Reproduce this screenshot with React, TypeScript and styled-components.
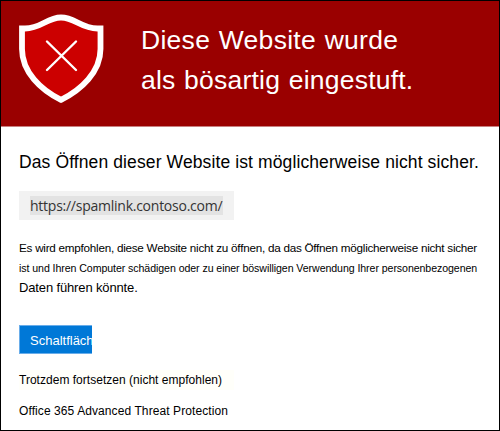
import React from "react";
import styled, { createGlobalStyle } from "styled-components";

const GlobalStyle = createGlobalStyle`
  * { box-sizing: border-box; }
  body { margin: 0; background: #fff; }
`;

const Frame = styled.main`
  display: flex;
  flex-direction: column;
  width: 500px;
  height: 431px;
  overflow: hidden;
  border: 1px solid #000;
  background: #fff;
  color: #000;
  font-family: "Liberation Sans", Arial, sans-serif;
`;

const Banner = styled.header`
  display: flex;
  flex: none;
  height: 126px;
  background: #9a0000;
  border-bottom: 1px solid #c98080;
`;

const Shield = styled.svg`
  flex: none;
  width: 88px;
  height: 94px;
  margin: 11px 0 0 17px;
`;

const Title = styled.h1`
  margin: 19px 0 0 35px;
  color: #fff;
  font-weight: 400;
  word-spacing: 1px;
`;

const Line = styled.span<{ $size: number; $height: number; $spacing?: number }>`
  display: block;
  width: max-content;
  white-space: nowrap;
  font-size: ${(p) => p.$size}px;
  line-height: ${(p) => p.$height}px;
  letter-spacing: ${(p) => p.$spacing ?? 0}px;
`;

const Content = styled.section`
  display: flex;
  flex-direction: column;
  align-items: flex-start;
  padding: 24px 0 0 18px;
`;

const Heading = styled.h2`
  margin: 0;
  font-weight: 400;
`;

const UrlBox = styled.div`
  display: flex;
  align-items: center;
  width: 215px;
  height: 29px;
  margin-top: 17px;
  padding-left: 11px;
  background: #f2f2f2;
`;

const Url = styled.span`
  height: 19px;
  width: 193px;
  background: #e3e3e3;
  color: #333;
  font: 500 14px/20px "Open Sans", "Noto Sans", sans-serif;
  letter-spacing: -0.25px;
  white-space: nowrap;
`;

const Advice = styled.p`
  margin: 18px 0 0;
`;

const Button = styled.button`
  width: 73px;
  height: 29px;
  margin-top: 27px;
  padding: 1px 0 0 10px;
  overflow: hidden;
  border: 1px solid #69adea;
  border-right: 0;
  background: #0078d7;
  color: #fff;
  font-family: inherit;
  text-align: left;
`;

const Continue = styled.a`
  margin-top: 16px;
  padding-right: 12px;
  background: #fffffa;
`;

const Product = styled.footer`
  margin-top: 11px;
`;

export default function App() {
  return (
    <>
      <GlobalStyle />
      <Frame>
        <Banner>
          <Shield viewBox="18 12 88 94" aria-hidden="true">
            <path
              d="M22 28.500H25C41 28.500 47 17.500 61 17.500S81 28.500 97.500 28.500H100.500V49C100.500 72 81 90 61 99.800C41 90 22 72 22 49Z"
              fill="#cc0000"
              stroke="#fff"
              strokeWidth="5.800"
            />
            <path d="M47 41.500L76 70M76 41.500L47 70" fill="none" stroke="#fff" strokeWidth="2.400" strokeLinecap="round" />
          </Shield>
          <Title>
            <Line $size={26.5} $height={40} $spacing={0.28}>Diese Website wurde</Line>
            <Line $size={26.5} $height={40} $spacing={0.22}>als bösartig eingestuft.</Line>
          </Title>
        </Banner>
        <Content>
          <Heading>
            <Line $size={17.5} $height={23} $spacing={0.11}>Das Öffnen dieser Website ist möglicherweise nicht sicher.</Line>
          </Heading>
          <UrlBox>
            <Url>https://spamlink.contoso.com/</Url>
          </UrlBox>
          <Advice>
            <Line $size={11.7} $height={20} $spacing={-0.25}>Es wird empfohlen, diese Website nicht zu öffnen, da das Öffnen möglicherweise nicht sicher</Line>
            <Line $size={10.6} $height={20} $spacing={-0.07}>ist und Ihren Computer schädigen oder zu einer böswilligen Verwendung Ihrer personenbezogenen</Line>
            <Line $size={13} $height={20} $spacing={-0.14}>Daten führen könnte.</Line>
          </Advice>
          <Button type="button">
            <Line $size={13} $height={27}>Schaltfläche</Line>
          </Button>
          <Continue>
            <Line $size={12} $height={20} $spacing={0.02}>Trotzdem fortsetzen (nicht empfohlen)</Line>
          </Continue>
          <Product>
            <Line $size={12} $height={20} $spacing={0.09}>Office 365 Advanced Threat Protection</Line>
          </Product>
        </Content>
      </Frame>
    </>
  );
}
